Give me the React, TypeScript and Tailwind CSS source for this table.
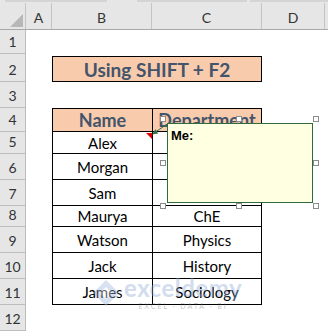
import React from "react";

const cellFont = { fontFamily: "Lato, 'Open Sans', sans-serif" };

interface DataRow {
  n: number;
  h: string;
  name: string;
  dept: string;
}

const dataRows: DataRow[] = [
  { n: 5, h: "h-[22px]", name: "Alex", dept: "" },
  { n: 6, h: "h-[26px]", name: "Morgan", dept: "" },
  { n: 7, h: "h-[26px]", name: "Sam", dept: "" },
  { n: 8, h: "h-[21px]", name: "Maurya", dept: "ChE" },
  { n: 9, h: "h-[26px]", name: "Watson", dept: "Physics" },
  { n: 10, h: "h-[26px]", name: "Jack", dept: "History" },
  { n: 11, h: "h-[26px]", name: "James", dept: "Sociology" },
];

function RowHead({ n }: { n: number }) {
  return (
    <div
      className="w-[26px] shrink-0 bg-[#e6e6e6] border-r border-b border-[#bdbdbd] flex items-end justify-center pb-[1px] text-[14px] leading-none text-[#333]"
      style={cellFont}
    >
      <span className="pb-[3px]">{n}</span>
    </div>
  );
}

function Handle({ x, y }: { x: number; y: number }) {
  return (
    <div
      className="absolute w-[6px] h-[6px] bg-white border border-[#8c8c8c]"
      style={{ left: x - 3, top: y - 3 }}
    />
  );
}

export default function App() {
  return (
    <div className="relative w-[328px] h-[331px] overflow-hidden bg-white" style={cellFont}>
      {/* top strip */}
      <div className="h-[3px] flex bg-[#e6e6e6]">
        <div className="ml-[5px] w-[102px] h-[2px] bg-[#d4d4d4]" />
        <div className="ml-[30px] w-[110px] h-[2px] bg-[#d4d4d4]" />
        <div className="ml-[3px] flex-1 h-[2px] bg-[#d4d4d4]" />
      </div>

      {/* column headers */}
      <div className="flex h-[27px] bg-[#e6e6e6] border-b border-[#a8a8a8] text-[14px] text-[#333]">
        <div className="w-[26px] shrink-0 border-r border-[#c4c4c4] relative">
          <svg className="absolute left-[10px] top-[11px]" width="13" height="13" viewBox="0 0 13 13">
            <polygon points="13,0 13,13 0,13" fill="#b7b7b7" />
          </svg>
        </div>
        <div className="w-[26px] shrink-0 border-r border-[#c4c4c4] flex items-center justify-center pt-[2px]">A</div>
        <div className="w-[100px] shrink-0 border-r border-[#c4c4c4] flex items-center justify-center pt-[2px]">B</div>
        <div className="w-[110px] shrink-0 border-r border-[#c4c4c4] flex items-center justify-center pt-[2px]">C</div>
        <div className="w-[63px] shrink-0 border-r border-[#c4c4c4] flex items-center justify-center pt-[2px]">D</div>
        <div className="flex-1" />
      </div>

      {/* row 1 */}
      <div className="flex h-[24px]">
        <RowHead n={1} />
      </div>

      {/* row 2 - title */}
      <div className="flex h-[28px]">
        <RowHead n={2} />
        <div className="w-[26px] shrink-0" />
        <div className="mt-[2px] w-[210px] h-[26px] shrink-0 bg-[#f8cbad] border border-black flex items-center justify-center text-[19px] font-bold text-[#44546a] leading-none pt-[1px]">
          Using SHIFT + F2
        </div>
      </div>

      {/* row 3 */}
      <div className="flex h-[26px]">
        <RowHead n={3} />
      </div>

      {/* row 4 - table header */}
      <div className="flex h-[24px]">
        <RowHead n={4} />
        <div className="w-[26px] shrink-0" />
        <div className="w-[100px] shrink-0 bg-[#f8cbad] border-l border-t border-b border-black flex items-center justify-center text-[18px] font-bold text-[#44546a] leading-none">
          Name
        </div>
        <div className="w-[110px] shrink-0 bg-[#f8cbad] border border-black flex items-center justify-center text-[18px] font-bold text-[#44546a] leading-none">
          Department
        </div>
      </div>

      {dataRows.map((r) => (
        <div key={r.n} className={`flex ${r.h}`}>
          <RowHead n={r.n} />
          <div className="w-[26px] shrink-0" />
          <div className="w-[100px] shrink-0 border-l border-b border-black flex items-center justify-center text-[15px] text-black leading-none pt-[1px]">
            {r.name}
          </div>
          <div className="w-[110px] shrink-0 border-l border-r border-b border-black flex items-center justify-center text-[15px] text-black leading-none pt-[1px]">
            {r.dept}
          </div>
        </div>
      ))}

      {/* row 12 */}
      <div className="flex h-[26px]">
        <RowHead n={12} />
      </div>

      {/* watermark */}
      <div className="absolute left-[92px] top-[276px] flex items-center gap-[4px] opacity-40 pointer-events-none">
        <svg width="28" height="28" viewBox="0 0 28 28">
          <polygon points="14,1 27,14 14,27 1,14" fill="#9fb6dd" />
          <polygon points="14,8 20,14 14,20 8,14" fill="#ffffff" />
        </svg>
        <div className="flex flex-col items-center">
          <span className="text-[24px] font-bold leading-none text-[#8fa9d8] tracking-[0.5px]">exceldemy</span>
          <span className="text-[7px] leading-none mt-[3px] text-[#777] tracking-[2px]">EXCEL · DATA · BI</span>
        </div>
      </div>

      {/* comment indicator */}
      <svg className="absolute left-[146px] top-[133px]" width="6" height="6" viewBox="0 0 6 6">
        <polygon points="0,0 6,0 6,6" fill="#e00000" />
      </svg>

      {/* arrow to comment */}
      <svg className="absolute left-[148px] top-[120px]" width="22" height="18" viewBox="148 120 22 18">
        <line x1="155.5" y1="132" x2="168" y2="123.5" stroke="#2f7045" strokeWidth="1" />
        <polygon points="152,134.5 158.2,133.4 155.4,129.2" fill="#2f7045" />
      </svg>

      {/* comment box */}
      <div className="absolute left-[167px] top-[123px] w-[146px] h-[80px] bg-[#ffffe1] border border-[#2f6b3f] px-[3px] pt-[2px] leading-none">
        <span className="text-[13px] font-bold text-black leading-none" style={{ fontFamily: "'Liberation Sans', Arial, sans-serif" }}>
          Me:
        </span>
      </div>

      {/* selection handles */}
      <Handle x={163} y={119} />
      <Handle x={239} y={119} />
      <Handle x={316} y={119} />
      <Handle x={163} y={163} />
      <Handle x={316} y={163} />
      <Handle x={163} y={206} />
      <Handle x={239} y={206} />
      <Handle x={316} y={206} />
    </div>
  );
}
